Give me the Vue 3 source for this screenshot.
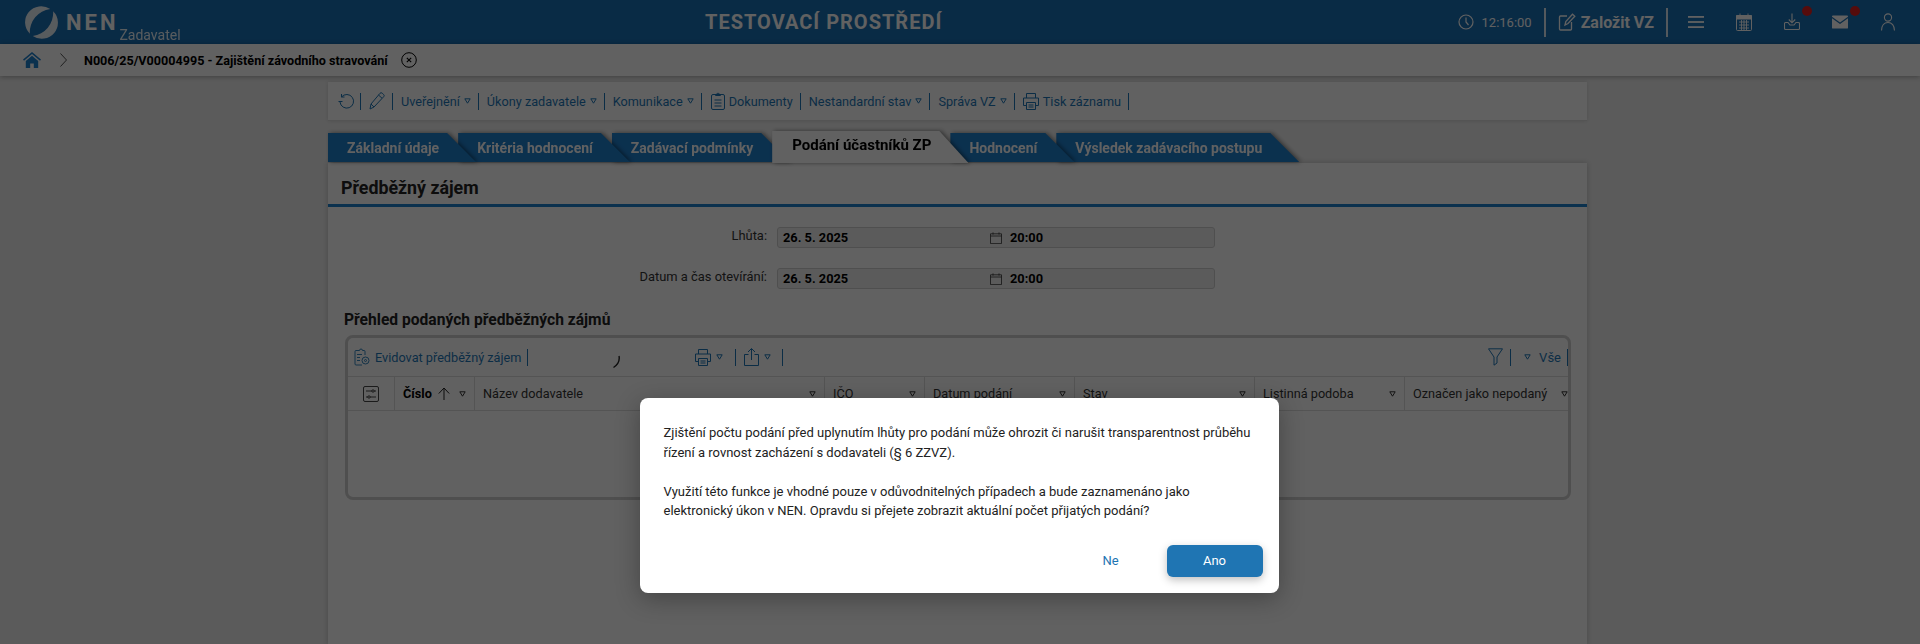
<template>
  <div class="app">
    <header class="topbar">
      <div class="brand">
        <svg class="logo" viewBox="0 0 34 34" fill="#fff">
          <path d="M26 3.200A16.500 16.500 0 0 0 5 28.500A24 24 0 0 1 26 3.200Z"/>
          <path d="M26 3.200A16.500 16.500 0 0 0 5 28.500A24 24 0 0 1 26 3.200Z" transform="rotate(180 17 17)"/>
        </svg>
        <span class="brand-name">NEN</span>
        <span class="brand-role">Zadavatel</span>
      </div>
      <div class="env">TESTOVACÍ PROSTŘEDÍ</div>
      <div class="top-actions">
        <svg class="clock" viewBox="0 0 16 16" fill="none" stroke="#fff" stroke-width="1.2"><circle cx="8" cy="8" r="7"/><path d="M8 3.500V8l2.500 3"/></svg>
        <span class="time">12:16:00</span>
        <span class="top-sep"></span>
        <svg class="edit" viewBox="0 0 18 18" fill="none" stroke="#fff" stroke-width="1.300"><path d="M9 3H2.500A1 1 0 0 0 1.500 4v12a1 1 0 0 0 1 1h10a1 1 0 0 0 1-1V9"/><path d="M7 12l.8-3.500L14.500 1.200l2.300 2-6.800 7.300Z"/></svg>
        <span class="new-vz">Založit VZ</span>
        <span class="top-sep second"></span>
        <div class="top-icons">
          <svg viewBox="0 0 16 16" fill="#fff"><rect x="0" y="2" width="16" height="1.800"/><rect x="0" y="7.100" width="16" height="1.800"/><rect x="0" y="12.200" width="16" height="1.800"/></svg>
          <svg viewBox="0 0 16 18" fill="none" stroke="#fff"><rect x=".5" y="2.500" width="15" height="15" rx="1"/><path d="M.5 2.500h15v3.500H.5Z" fill="#fff"/><path d="M4 .5v3M12 .5v3M3 9h10M3 12h10M3 15h10M5.500 7v10M8 7v10M10.500 7v10" stroke-width=".9"/></svg>
          <span class="ic-dot">
            <svg viewBox="0 0 16 18" fill="none" stroke="#fff" stroke-width="1.100"><path d="M8 .5v9M4.800 6.500 8 9.800l3.200-3.300"/><path d="M4 9.500H1.500a1 1 0 0 0-1 1v5a1 1 0 0 0 1 1h13a1 1 0 0 0 1-1v-5a1 1 0 0 0-1-1H12l-2 2.500H6Z"/></svg>
            <i class="dot"></i>
          </span>
          <span class="ic-dot">
            <svg viewBox="0 0 17 14" fill="#fff"><path d="M1 0h15a1 1 0 0 1 1 1v.4L8.500 7.500 0 1.400V1a1 1 0 0 1 1-1Z"/><path d="M0 2.900V13a1 1 0 0 0 1 1h15a1 1 0 0 0 1-1V2.900L8.500 9Z"/></svg>
            <i class="dot"></i>
          </span>
          <svg viewBox="0 0 16 20" fill="none" stroke="#fff" stroke-width="1.200"><circle cx="8" cy="5" r="4"/><path d="M.8 19.500c0-5.500 3-9 7.200-9s7.200 3.500 7.200 9"/></svg>
        </div>
      </div>
    </header>

    <div class="crumbs">
      <svg class="home" viewBox="0 0 18 16" fill="#1f80ce"><path d="M9 0 0 7.600l1 1.200L9 2.100l8 6.700 1-1.200Z"/><path d="M9 3.700 2.800 8.900V16h4.400v-4.500h3.600V16h4.400V8.900Z"/></svg>
      <svg class="chev" viewBox="0 0 7 14" fill="none" stroke="#555" stroke-width="1"><path d="M.5 .5 6.500 7l-6 6.500"/></svg>
      <span class="crumb-text">N006/25/V00004995 - Zajištění závodního stravování</span>
      <svg class="crumb-close" viewBox="0 0 16 16" fill="none" stroke="#000"><circle cx="8" cy="8" r="7.300"/><path d="m5.800 5.800 4.400 4.400m0-4.400-4.400 4.400" stroke-width="1.100"/></svg>
    </div>

    <main class="content">
      <div class="toolbar">
        <span class="tool icon-only first">
          <svg width="17" height="17" viewBox="0 0 17 17" fill="none" stroke="#1f78b8" stroke-width="1"><path d="M3.500 4A6.800 6.800 0 1 1 2 9"/><path d="M.5 8.500h4"/><path d="M3.500 1v3h3"/></svg>
        </span>
        <span class="tool icon-only">
          <svg width="16" height="18" viewBox="0 0 16 18" fill="none" stroke="#1f78b8" stroke-width="1"><path d="M1 17l1-5L11 1.300a1.500 1.500 0 0 1 2.200-.1l1.500 1.400a1.500 1.500 0 0 1 0 2.100L5 15Z"/><path d="M9.500 3l3.500 3.200M2 12l3 3"/></svg>
        </span>
        <span v-for="item in toolbarItems" :key="item.label" class="tool" :class="item.icon">
          <svg v-if="item.icon === 'doc'" width="14" height="18" viewBox="0 0 14 18" fill="none" stroke="#1f78b8"><rect x=".5" y="2.500" width="13" height="15" rx="1.500"/><path d="M4.500 3.500v-1l1.500-.3a1 1 0 0 1 2 0l1.500.3v1ZM3.500 8h7M3.500 11h7M3.500 14h7"/></svg>
          <svg v-if="item.icon === 'print'" width="16" height="17" viewBox="0 0 16 17" fill="none" stroke="#1f78b8"><path d="M3.500 5V.5h9V5M3.500 12.500H.5V5h15v7.500h-3"/><path d="M3.500 9.500h9v7h-9ZM5.500 12h5M5.500 14h5"/></svg>
          {{ item.label }}
          <svg v-if="item.arrow" class="tri" viewBox="0 0 7 6" fill="none" stroke="#1f78b8"><path d="M.8 .8h5.400L3.500 5.200Z"/></svg>
        </span>
      </div>

      <div class="tabs">
        <div
          v-for="(tab, i) in tabs"
          :key="tab"
          class="tab"
          :class="{ active: tab === activeTab }"
          :style="{ zIndex: tab === activeTab ? 20 : 10 - i }"
        >
          <span>{{ tab }}</span>
        </div>
      </div>

      <section class="panel">
        <h1 class="panel-title">Předběžný zájem</h1>

        <div class="form-row">
          <label>Lhůta:</label>
          <div class="field">
            <span class="date">26. 5. 2025</span>
            <svg class="cal" viewBox="0 0 12 12" fill="none" stroke="#333" stroke-width=".8"><path d="M.5 1.800h11v9.800H.5ZM.5 4h11M3 .4v2.200M9 .4v2.200"/></svg>
            <span>20:00</span>
          </div>
        </div>
        <div class="form-row">
          <label>Datum a čas otevírání:</label>
          <div class="field">
            <span class="date">26. 5. 2025</span>
            <svg class="cal" viewBox="0 0 12 12" fill="none" stroke="#333" stroke-width=".8"><path d="M.5 1.800h11v9.800H.5ZM.5 4h11M3 .4v2.200M9 .4v2.200"/></svg>
            <span>20:00</span>
          </div>
        </div>

        <h2 class="grid-title">Přehled podaných předběžných zájmů</h2>

        <div class="grid">
          <div class="grid-tools">
            <span class="gt add">
              <svg width="16" height="18" viewBox="0 0 16 18" fill="none" stroke="#1f78b8" stroke-width=".9"><path d="M11 7V3.500A1 1 0 0 0 10 2.500H8.500a1.500 1.500 0 0 0-3 0H2A1 1 0 0 0 1 3.500V16a1 1 0 0 0 1 1h6"/><path d="M3 6.500h5M3 9.500h3M3 12.500h3"/><circle cx="11.500" cy="12.500" r="3.500"/><circle cx="11.500" cy="12.500" r="1"/></svg>
              Evidovat předběžný zájem
            </span>
            <svg class="spinner" viewBox="0 0 10 14" fill="none" stroke="#222" stroke-width="1.400"><path d="M8 1c.8 4-1 8.500-5.500 11.500"/></svg>
            <span class="gt print">
              <svg width="16" height="17" viewBox="0 0 16 17" fill="none" stroke="#1f78b8"><path d="M3.500 5V.5h9V5M3.500 12.500H.5V5h15v7.500h-3"/><path d="M3.500 9.500h9v7h-9ZM5.500 12h5M5.500 14h5"/></svg>
              <svg class="tri" viewBox="0 0 7 6" fill="none" stroke="#1f78b8"><path d="M.8 .8h5.400L3.500 5.200Z"/></svg>
            </span>
            <span class="gt share">
              <svg width="15" height="18" viewBox="0 0 15 18" fill="none" stroke="#1f78b8"><path d="M4.500 6.500H.5v11h14v-11h-4M7.500 12V.8M4 4l3.500-3.500L11 4"/></svg>
              <svg class="tri" viewBox="0 0 7 6" fill="none" stroke="#1f78b8"><path d="M.8 .8h5.400L3.500 5.200Z"/></svg>
            </span>
            <span class="grid-tools-right">
              <span class="gt filter">
                <svg width="15" height="18" viewBox="0 0 15 18" fill="none" stroke="#1f78b8"><path d="M.5 .8h14L9 9v6l-3 2.200V9Z"/></svg>
              </span>
              <span class="gt all">
                <svg class="tri" viewBox="0 0 7 6" fill="none" stroke="#1f78b8"><path d="M.8 .8h5.400L3.500 5.200Z"/></svg>
                Vše
              </span>
            </span>
          </div>
          <div class="grid-head">
            <div class="col col-set">
              <svg width="16" height="16" viewBox="0 0 16 16" fill="none" stroke="#333" stroke-width=".9"><rect x=".5" y=".5" width="15" height="15" rx="1.500"/><path d="M3 5h6M11 5h2M3 11h2M7 11h6"/><circle cx="10" cy="5" r="1.200"/><circle cx="6" cy="11" r="1.200"/></svg>
            </div>
            <div v-for="col in columns" :key="col.label" class="col" :class="{ sorted: col.sorted }" :style="{ width: col.width + 'px' }">
              <span class="col-label">{{ col.label }}</span>
              <svg v-if="col.sorted" class="sort" viewBox="0 0 12 13" fill="none" stroke="#222" stroke-width="1"><path d="M6 13V1M.8 6.500 6 1l5.200 5.500"/></svg>
              <svg class="tri" viewBox="0 0 7 6" fill="none" stroke="#333"><path d="M.8 .8h5.400L3.500 5.200Z"/></svg>
            </div>
          </div>
          <div class="grid-body"></div>
        </div>
      </section>
    </main>

    <div class="overlay">
      <div class="dialog">
        <p>Zjištění počtu podání před uplynutím lhůty pro podání může ohrozit či narušit transparentnost průběhu řízení a rovnost zacházení s dodavateli (§ 6 ZZVZ).</p>
        <p class="second-par">Využití této funkce je vhodné pouze v odůvodnitelných případech a bude zaznamenáno jako elektronický úkon v NEN. Opravdu si přejete zobrazit aktuální počet přijatých podání?</p>
        <div class="dialog-actions">
          <button class="btn-no">Ne</button>
          <button class="btn-yes">Ano</button>
        </div>
      </div>
    </div>
  </div>
</template>

<script setup>
const toolbarItems = [
  { label: 'Uveřejnění', arrow: true },
  { label: 'Úkony zadavatele', arrow: true },
  { label: 'Komunikace', arrow: true },
  { label: 'Dokumenty', icon: 'doc' },
  { label: 'Nestandardní stav', arrow: true },
  { label: 'Správa VZ', arrow: true },
  { label: 'Tisk záznamu', icon: 'print' }
]

const tabs = [
  'Základní údaje',
  'Kritéria hodnocení',
  'Zadávací podmínky',
  'Podání účastníků ZP',
  'Hodnocení',
  'Výsledek zadávacího postupu'
]
const activeTab = 'Podání účastníků ZP'

const columns = [
  { label: 'Číslo', width: 80, sorted: true },
  { label: 'Název dodavatele', width: 350 },
  { label: 'IČO', width: 100 },
  { label: 'Datum podání', width: 150 },
  { label: 'Stav', width: 180 },
  { label: 'Listinná podoba', width: 150 },
  { label: 'Označen jako nepodaný', width: 172 }
]
</script>

<style>
html, body {
  margin: 0;
  overflow: hidden;
}
</style>

<style scoped>
.app {
  position: relative;
  height: 644px;
  overflow: hidden;
  background: #efefef;
  font-family: Roboto, "Liberation Sans", sans-serif;
  color: #222;
}

/* horni lista */
.topbar {
  height: 44px;
  background: #1a71b5;
  color: #fff;
  display: flex;
  align-items: center;
  position: relative;
}
.brand {
  display: flex;
  align-items: flex-start;
  padding-left: 25px;
  height: 44px;
}
.logo {
  width: 33px;
  height: 33px;
  margin-top: 6px;
  opacity: .9;
}
.brand-name {
  font-size: 22px;
  font-weight: 700;
  letter-spacing: 3px;
  margin: 10px 0 0 8px;
  line-height: 26px;
}
.brand-role {
  font-size: 14px;
  opacity: .9;
  margin: 27px 0 0 1px;
  line-height: 16px;
}
.env {
  position: absolute;
  left: 705px;
  top: 10px;
  font-size: 20px;
  line-height: 24px;
  font-weight: 700;
  letter-spacing: 1px;
}
.top-actions {
  margin-left: auto;
  display: flex;
  align-items: center;
  height: 44px;
}
.clock {
  width: 16px;
  height: 16px;
  margin-right: 8px;
}
.time {
  font-size: 13px;
  margin-right: 12px;
}
.top-sep {
  width: 2px;
  height: 29px;
  background: #fff;
  opacity: .85;
}
.edit {
  width: 18px;
  height: 18px;
  margin: 0 5px 0 12px;
}
.new-vz {
  font-size: 16px;
  font-weight: 700;
  margin-right: 12px;
}
.top-icons {
  display: flex;
  align-items: center;
  gap: 32px;
  margin: 0 24px 0 20px;
}
.top-icons svg {
  width: 16px;
  height: 18px;
  display: block;
}
.ic-dot {
  position: relative;
  display: block;
}
.dot {
  position: absolute;
  left: 18px;
  top: -7px;
  width: 10px;
  height: 10px;
  border-radius: 50%;
  background: #e02020;
}

/* drobecky */
.crumbs {
  height: 32px;
  background: #fff;
  display: flex;
  align-items: center;
  box-shadow: 0 1px 5px rgba(0, 0, 0, .3);
  position: relative;
}
.home {
  width: 18px;
  height: 16px;
  margin-left: 23px;
}
.chev {
  width: 7px;
  height: 14px;
  margin-left: 19px;
}
.crumb-text {
  font-size: 12.6px;
  font-weight: 700;
  color: #000;
  margin-left: 17px;
}
.crumb-close {
  width: 16px;
  height: 16px;
  margin-left: 13px;
}

.content {
  width: 1259px;
  margin: 6px 0 0 328px;
}

.toolbar {
  height: 39px;
  background: #fff;
  display: flex;
  align-items: center;
  padding-left: 2px;
  border-bottom: 1px solid #ddd;
  box-sizing: border-box;
  box-shadow: 0 0 4px rgba(0, 0, 0, .12);
}
.tool {
  display: flex;
  align-items: center;
  gap: 4px;
  height: 17px;
  padding: 0 7px 0 8px;
  border-right: 1px solid #1f78b8;
  font-size: 12.7px;
  color: #1f78b8;
  white-space: nowrap;
}
.tool.first {
  padding-right: 5px;
}
.tool.doc {
  padding-left: 9px;
}
.tri {
  width: 7px;
  height: 6px;
  flex-shrink: 0;
}

.tabs {
  display: flex;
  align-items: flex-start;
  margin-top: 10px;
  height: 32px;
}
.tab {
  position: relative;
  height: 29px;
  margin-top: 2px;
  display: flex;
  align-items: center;
  padding: 0 37px 0 19px;
  margin-right: -18px;
  font-size: 14px;
  font-weight: 700;
  color: #fff;
  white-space: nowrap;
  filter: drop-shadow(2px 0 2px rgba(0, 0, 0, .45));
}
.tab::before {
  content: "";
  position: absolute;
  inset: 0;
  background: #1f80ce;
  clip-path: polygon(0 0, calc(100% - 29px) 0, 100% 100%, 0 100%);
}
.tab span {
  position: relative;
}
.tab.active {
  height: 32px;
  margin-top: 0;
  color: #000;
  font-size: 15px;
  padding: 0 37px 4px 20px;
  box-sizing: border-box;
}
.tab.active::before {
  background: #fff;
}

.panel {
  position: relative;
  background: #fff;
  height: 482px;
  box-shadow: 0 0 6px rgba(0, 0, 0, .2);
}
.panel-title {
  margin: 0;
  height: 44px;
  box-sizing: border-box;
  border-bottom: 3px solid #1f80ce;
  padding: 14px 0 0 13px;
  font-size: 17.8px;
  line-height: 22px;
  font-weight: 700;
  color: #222;
}
.form-row {
  display: flex;
  align-items: center;
  height: 21px;
  margin-top: 20px;
}
.form-row label {
  width: 439px;
  text-align: right;
  font-size: 12.9px;
  color: #333;
  margin-right: 10px;
  margin-bottom: 5px;
}
.field {
  width: 438px;
  height: 21px;
  box-sizing: border-box;
  background: #f0f0f0;
  border: 1px solid #d0d0d0;
  border-radius: 3px;
  display: flex;
  align-items: center;
  padding-left: 5px;
  font-size: 12.8px;
  font-weight: 700;
  color: #000;
}
.date {
  width: 207px;
}
.cal {
  width: 12px;
  height: 12px;
  margin-right: 8px;
}

.grid-title {
  margin: 21px 0 0 16px;
  font-size: 15.6px;
  line-height: 20px;
  font-weight: 700;
  color: #222;
}
.grid {
  margin: 5px 16px 0 17px;
  height: 165px;
  box-sizing: border-box;
  border: 3px solid #d0d0d0;
  border-radius: 8px;
  overflow: hidden;
  display: flex;
  flex-direction: column;
}
.grid-tools {
  position: relative;
  height: 38px;
  flex-shrink: 0;
  display: flex;
  align-items: center;
  border-bottom: 1px solid #ddd;
}
.gt {
  display: flex;
  align-items: center;
  gap: 5px;
  height: 17px;
  padding-right: 6px;
  border-right: 1px solid #1f78b8;
  font-size: 12.7px;
  color: #1f78b8;
  white-space: nowrap;
}
.gt.add {
  padding-left: 6px;
}
.gt.print {
  margin-left: 167px;
  padding-right: 12px;
}
.gt.share {
  padding-left: 8px;
  padding-right: 11px;
}
.spinner {
  position: absolute;
  left: 263px;
  top: 17px;
  width: 10px;
  height: 14px;
}
.grid-tools-right {
  margin-left: auto;
  display: flex;
  align-items: center;
}
.gt.filter {
  padding-right: 7px;
}
.gt.all {
  padding: 0 6px 0 13px;
  gap: 8px;
  font-size: 13px;
}
.grid-head {
  height: 33px;
  flex-shrink: 0;
  display: flex;
  border-bottom: 1px solid #ddd;
}
.col {
  flex-shrink: 0;
  box-sizing: border-box;
  display: flex;
  align-items: center;
  justify-content: space-between;
  padding: 0 8px;
  border-right: 1px solid #ddd;
  font-size: 12.7px;
  color: #333;
  white-space: nowrap;
}
.col-set {
  width: 47px;
  justify-content: center;
}
.col.sorted {
  font-weight: 700;
  color: #000;
  gap: 6px;
}
.sort {
  width: 12px;
  height: 13px;
  margin-left: 0;
}
.col.sorted .col-label {
  margin-right: -2px;
}
.grid-body {
  flex: 1;
}

/* modalni dialog */
.overlay {
  position: absolute;
  inset: 0;
  background: rgba(0, 0, 0, .62);
  display: flex;
  justify-content: center;
  align-items: flex-start;
  padding-top: 398px;
  box-sizing: border-box;
  z-index: 50;
}
.dialog {
  width: 639px;
  height: 195px;
  margin-right: 2px;
  box-sizing: border-box;
  background: #fff;
  border-radius: 8px;
  padding: 25px 24px 0 24px;
  box-shadow: 0 6px 24px rgba(0, 0, 0, .3);
  display: flex;
  flex-direction: column;
  font-size: 13px;
  line-height: 19.5px;
  color: #222;
}
.dialog p {
  margin: 0;
}
.dialog .second-par {
  margin-top: 19.5px;
}
.dialog-actions {
  display: flex;
  justify-content: flex-end;
  align-items: center;
  margin: 24.500px -8px 0 0;
}
.btn-no {
  background: none;
  border: none;
  color: #1f75b3;
  font: inherit;
  font-size: 13px;
  padding: 0;
  width: 96px;
  height: 32px;
  margin-right: 8px;
}
.btn-yes {
  background: #1f75b3;
  border: none;
  border-radius: 6px;
  color: #fff;
  font: inherit;
  font-size: 13px;
  width: 96px;
  height: 32px;
  box-shadow: 0 3px 8px rgba(0, 0, 0, .25);
}
</style>
